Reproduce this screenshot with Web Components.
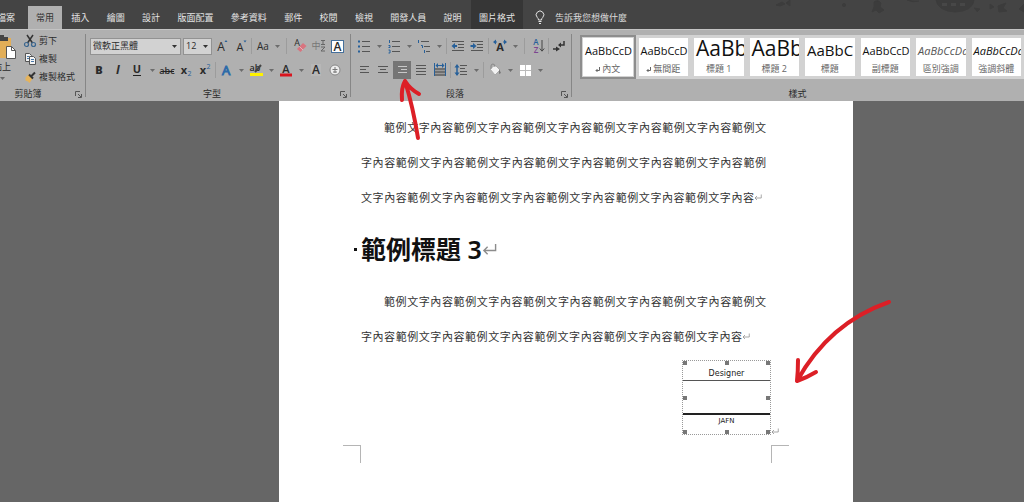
<!DOCTYPE html>
<html lang="zh-Hant">
<head>
<meta charset="utf-8">
<title>Word</title>
<style>
html, body { margin: 0; min-height: 100%; background: #666; }
body { font: 9px/14px "Open Sans", "Noto Sans CJK TC", sans-serif; color: #222; overflow-x: hidden; }
</style>
</head>
<body>
<word-app></word-app>
<script>
const BASE = `<style>*{box-sizing:border-box}button,input,select{font:inherit;color:inherit;border:0;margin:0;padding:0;background:none;border-radius:0}svg{display:block;overflow:visible}</style>`;
function define(name, html, setup) {
  customElements.define(name, class extends HTMLElement {
    constructor() {
      super();
      this.attachShadow({ mode: "open" });
    }
    connectedCallback() {
      this.shadowRoot.innerHTML = BASE + (typeof html === "function" ? html(this) : html);
      if (setup) setup(this);
    }
  });
}

const lines = (rows, color = "#555") => rows.map(([x, y, w]) => `<path d="M${x} ${y}h${w}" stroke="${color}"/>`).join("");
const T = (x, y, size, text, extra = "") => `<text x="${x}" y="${y}" font-size="${size}" ${extra}>${text}</text>`;
const MID = 'text-anchor="middle"';
const ICONS = {
  cut: `<path d="M6 3l5.500 8M12 3L6.500 11" stroke="#333" stroke-width="1.500" fill="none"/><circle cx="5.500" cy="12.500" r="2" fill="none" stroke="#3a668f" stroke-width="1.200"/><circle cx="12.500" cy="12.500" r="2" fill="none" stroke="#3a668f" stroke-width="1.200"/>`,
  copy: `<path d="M4.500 3.500h4l2 2v6h-6z" fill="#f4f4f4" stroke="#555"/><path d="M8.500 6.500h4l2 2v6h-6z" fill="#f4f4f4" stroke="#555"/><path d="M6 6.500h2M6 8.500h2M10 9.500h3M10 11.500h3" stroke="#4a78a8"/>`,
  brush: `<path d="M4.500 9.500l3-3 4 4-3 4.500q-1-2-4-2.500z" fill="#e5b35c"/><path d="M8 6.500l4 4M10 8.500l4-4" stroke="#333" stroke-width="2"/>`,
  grow: T(8, 14, 12, "A", MID) + `<path d="M11.500 5l1.500-2 1.500 2z" fill="#27609a"/>`,
  shrink: T(8, 14, 11, "A", MID) + `<path d="M11.500 3.500l1.500 2 1.500-2z" fill="#27609a"/>`,
  aa: T(10, 13, 10, "Aa", MID),
  erase: T(6, 9, 9, "A", MID) + `<path d="M6 12l6-6 3.500 3-6 6z" fill="#d8747f"/><path d="M8.500 9.500l3.500 3.500" stroke="#eab3b8"/>`,
  phonetic: T(6, 12, 9, "中", MID + ' fill="#777"') + `<path d="M11 3.500h4M13 3v4M11 7.500h4M11 10h4l-4 4h4" stroke="#666" fill="none"/>`,
  boxed: `<rect x="2.500" y="3.500" width="12" height="12" fill="#fff" stroke="#46709b"/>` + T(8.5, 14, 12, "A", MID + ' font-weight="600"'),
  bold: T(9, 13, 11, "B", MID + ' font-weight="800"'),
  italic: T(9, 13, 12, "I", MID + ' font-weight="bold" font-style="italic" font-family="Liberation Serif, serif"'),
  under: T(9, 12, 11, "U", MID + ' font-weight="700"') + `<path d="M5 14.500h8" stroke="#222"/>`,
  strike: T(9, 13, 9, "abc", MID + ' font-weight="600"') + `<path d="M3 10.500h13" stroke="#222"/>`,
  sub: T(7, 13, 11, "x", MID + ' font-weight="700"') + T(12.5, 15, 7, "2", MID + ' fill="#27609a"'),
  sup: T(7, 13, 11, "x", MID + ' font-weight="700"') + T(12.5, 8, 7, "2", MID + ' fill="#27609a"'),
  effect: T(9, 14, 13, "A", MID + ' fill="#a9c3df" stroke="#2f6ba8" stroke-width="1"'),
  mark: T(8, 10, 9, "ab", MID + ' font-weight="600"') + `<path d="M8 11l6-7" stroke="#444" stroke-width="2"/><path d="M3 13.500h13" stroke="#fff200" stroke-width="3"/>`,
  color: T(9, 12, 11, "A", MID + ' font-weight="600"') + `<path d="M3 14h12" stroke="#d9141e" stroke-width="3"/>`,
  shade: `<rect x="4" y="3" width="10" height="12" fill="#b7b7b7"/>` + T(9, 13, 12, "A", MID + ' font-weight="600"'),
  circled: `<circle cx="9" cy="9" r="5" fill="#eee" stroke="#888"/><path d="M6.500 8.500h5M9 6v6M7 11h4" stroke="#777"/>`,
  bullets: lines([[7, 4.5, 8], [7, 9.5, 8], [7, 14.5, 8]]) + `<path d="M3 4.500h2M3 9.500h2M3 14.500h2" stroke="#27609a" stroke-width="2"/>`,
  numbers: lines([[7, 4.5, 8], [7, 9.5, 8], [7, 14.5, 8]]) + `<path d="M4.500 3v3M3.500 8.500h1.500v2H3.500M3.500 13h1.500v3H3.500" stroke="#27609a" fill="none"/>`,
  levels: lines([[6, 4.5, 8], [9, 9.5, 6], [11, 14.5, 4]]) + `<path d="M3.500 3v3M6 8.500h1.500v2.500M9.500 13v3" stroke="#27609a" fill="none"/>`,
  outdent: lines([[3, 4.5, 12], [9, 7.5, 6], [9, 10.5, 6], [3, 13.5, 12]]) + `<path d="M8 9H5" stroke="#27609a" stroke-width="2"/><path d="M6 6v6L2.500 9z" fill="#27609a"/>`,
  indent: lines([[3, 4.5, 12], [9, 7.5, 6], [9, 10.5, 6], [3, 13.5, 12]]) + `<path d="M2.500 9h3" stroke="#27609a" stroke-width="2"/><path d="M5 6v6l3.500-3z" fill="#27609a"/>`,
  scale: T(9, 14, 11, "A", MID + ' font-weight="700"') + `<path d="M3 5h3M12 5h3" stroke="#27609a"/><path d="M5 2.500v5L2 5zM13 2.500v5L16 5z" fill="#27609a"/>`,
  sort: T(7, 8, 8, "A", MID + ' fill="#27609a" font-weight="600"') + T(7, 16, 8, "Z", MID + ' fill="#7c4591" font-weight="600"') + `<path d="M13 3v11M10.800 11.500l2.200 2.700 2.200-2.700" stroke="#444" fill="none"/>`,
  marks: `<path d="M14 4v4h-4M3 12h5" stroke="#333" stroke-width="1.500" fill="none"/><path d="M11 5.500v5L8 8zM6 9.500v5L10 12z" fill="#333"/>`,
  left: lines([[5, 5.5, 9], [5, 8.5, 6], [5, 11.5, 9]]),
  center: lines([[4, 5.5, 10], [6, 8.5, 6], [4, 11.5, 10]]),
  right: lines([[5, 5.5, 9], [8, 8.5, 6], [5, 11.5, 9]], "#c8c8c8"),
  justify: lines([[4, 4.5, 10], [4, 7.5, 10], [4, 10.5, 10], [4, 13.5, 10]]),
  spread: `<path d="M4 7h10v8H4z" fill="#6f6f6f"/><path d="M4 9.500h10M4 12.500h10" stroke="#999"/><path d="M3.500 2v13M14.500 2v13" stroke="#27609a"/><path d="M5 4.500h8" stroke="#27609a"/><path d="M7 2v5L4.500 4.500zM11 2v5l2.500-2.500z" fill="#27609a"/>`,
  spacing: lines([[8, 4.5, 7], [8, 7.5, 5], [8, 10.5, 7], [8, 13.5, 7]]) + `<path d="M5 5v9" stroke="#27609a" stroke-width="1.500"/><path d="M2.500 6.500h5L5 3zM2.500 11.500h5L5 15z" fill="#27609a"/>`,
  bucket: `<path d="M4 8l5-4 5 5-5 5z" fill="#f2f2f2" stroke="#aaa"/><path d="M5 8V5q0-2 2-2t2 3" stroke="#888" fill="none"/><path d="M13 8l2 4-2 1z" fill="#777"/>`,
  borders: `<rect x="4" y="4" width="11" height="11" fill="#fff"/><path d="M9.500 4v11M4 9.500h11" stroke="#bbb"/>`,
};

/* One ribbon command; "arrow" icons are the narrow drop-down halves. */
define("rb-tool", el => `<style>
  :host{display:block;flex:none;width:18px;height:18px}
  :host([icon=arrow]){width:10px}
  button{display:grid;place-items:center;width:100%;height:100%}
  button[aria-pressed=true]{background:#757575}
  svg text{font-family:"Open Sans","Noto Sans CJK TC",sans-serif}
  </style><button type="button" aria-label="${el.getAttribute("label")}" ${el.hasAttribute("pressed") ? 'aria-pressed="true"' : ""}>${
  el.getAttribute("icon") === "arrow"
    ? `<svg width="5" height="3"><path d="M0 0h5L2.500 3z" fill="#6c6c6c"/></svg>`
    : `<svg width="18" height="18" fill="#2b2b2b">${ICONS[el.getAttribute("icon")]}</svg>`}</button>`);

define("rb-sep", `<style>:host{display:block;flex:none;width:1px;height:16px;background:#9c9c9c}:host([wide]){margin:0 3px}:host([mid]){margin:0 1px}</style>`);

define("rb-select", el => `<style>
  :host{display:flex;align-items:center;position:relative;flex:none;width:29px;height:17px;background:#d2d2d2;border:1px solid #929292}
  :host([wide]){width:91px;margin-right:1px}
  select{appearance:none;width:100%;height:100%;padding:0 2px;outline:0;font-size:9px;line-height:14px}
  svg{position:absolute;right:3px;top:6px;pointer-events:none}
  </style><select aria-label="${el.getAttribute("label")}"><option>${el.getAttribute("value")}</option></select>
  <svg width="5" height="3"><path d="M0 0h5L2.500 3z" fill="#333"/></svg>`);

define("rb-group", el => `<style>
  :host{display:flex;flex-direction:column;flex:none}
  :host([grow]){flex:1;min-width:0}
  .body{height:55px}
  footer{display:flex;align-items:center;height:14px;padding:0 1px 0 0}
  footer span{flex:1;text-align:center}
  button{width:11px;height:11px;display:grid;place-items:center}
  </style><div class="body"><slot></slot></div><footer><span>${el.getAttribute("label")}</span>${
  el.hasAttribute("plain") ? "" : `<button type="button" aria-label="${el.getAttribute("label")}設定"><svg width="7" height="7"><path d="M.5 5V.5H5M3 3l3 3M6.500 3v3.500H3" stroke="#555" fill="none"/></svg></button>`}</footer>`);

define("rb-divider", `<style>:host{display:block;flex:none;width:1px;margin:2px 0 4px;background:#868686}</style>`);

define("rb-clipboard", `<style>
  :host{display:flex;height:54px;width:102px}
  .paste{width:38px;display:flex;flex-direction:column;align-items:center;padding-top:3px;line-height:12px;flex:none}
  .paste svg:last-child{margin-top:4px}
  ul{list-style:none;margin:0;padding:0}
  li button{display:flex;align-items:center;height:18px;white-space:nowrap}
  </style>
  <button class="paste" type="button"><svg width="30" height="26"><rect x="4" y="3" width="20" height="20" fill="#e2ae58"/><path d="M8 6V2h4V0h5v2h4v4z" fill="#444"/><path d="M19.500 11.500h5l4 4v8h-9z" fill="#fff" stroke="#555"/><path d="M24.500 11.500v4h4" fill="none" stroke="#555"/></svg>貼上<svg width="5" height="3"><path d="M0 0h5L2.500 3z" fill="#666"/></svg></button>
  <ul>
    <li><button type="button"><svg width="18" height="18">${ICONS.cut}</svg>剪下</button></li>
    <li><button type="button"><svg width="18" height="18">${ICONS.copy}</svg>複製</button></li>
    <li><button type="button"><svg width="18" height="18">${ICONS.brush}</svg>複製格式</button></li>
  </ul>`);

const ROWS = `<style>:host{display:block;padding:2px 3px 0 4px}.row{display:flex;align-items:center;gap:1px;height:24px}.anchor{position:relative}</style>`;
const arrow = label => `<rb-tool icon="arrow" label="${label}選項"></rb-tool>`;
const tool = (icon, label) => `<rb-tool icon="${icon}" label="${label}"></rb-tool>`;

define("rb-font", ROWS + `
  <div class="row"><rb-select wide label="字型" value="微軟正黑體"></rb-select><rb-select label="字型大小" value="12"></rb-select>
  ${tool("grow", "放大字型")}${tool("shrink", "縮小字型")}<rb-sep></rb-sep>${tool("aa", "大小寫轉換")}${arrow("大小寫")}<rb-sep wide></rb-sep>${tool("erase", "清除格式")}${tool("phonetic", "注音標示")}${tool("boxed", "字元框線")}</div>
  <div class="row">${tool("bold", "粗體")}${tool("italic", "斜體")}${tool("under", "底線")}${arrow("底線")}${tool("strike", "刪除線")}${tool("sub", "下標")}${tool("sup", "上標")}<rb-sep></rb-sep>${tool("effect", "文字效果")}${arrow("文字效果")}${tool("mark", "醒目提示")}${arrow("醒目提示")}${tool("color", "字型色彩")}${arrow("色彩")}${tool("shade", "字元網底")}${tool("circled", "圍繞字元")}</div>`);

define("rb-paragraph", ROWS + `<style>red-arrow{position:absolute;left:0;top:15px;pointer-events:none}</style>
  <div class="row">${tool("bullets", "項目符號")}${arrow("項目符號")}${tool("numbers", "編號")}${arrow("編號")}${tool("levels", "多層次清單")}${arrow("清單")}<rb-sep mid></rb-sep>${tool("outdent", "減少縮排")}${tool("indent", "增加縮排")}<rb-sep mid></rb-sep>${tool("scale", "亞洲方式配置")}${arrow("配置")}<rb-sep wide></rb-sep>${tool("sort", "排序")}<rb-sep></rb-sep>${tool("marks", "顯示編輯標記")}</div>
  <div class="row">${tool("left", "靠左對齊")}${tool("center", "置中")}<div class="anchor"><rb-tool pressed icon="right" label="靠右對齊"></rb-tool><red-arrow kind="up"></red-arrow></div>${tool("justify", "左右對齊")}${tool("spread", "分散對齊")}<rb-sep></rb-sep>${tool("spacing", "行距")}${arrow("行距")}<rb-sep mid></rb-sep>${tool("bucket", "網底")}${arrow("網底")}${tool("borders", "框線")}${arrow("框線")}</div>`);

define("style-tile", el => `<style>
  :host{display:block;min-width:0;padding:3px}
  :host([selected]){padding:1px;border:2px solid #8d8d8d;background:#d2d2d2}
  button{display:flex;flex-direction:column;width:100%;height:38px;background:#fff;overflow:hidden}
  .sample{height:25px;width:100%;line-height:25px;padding-left:2px;text-align:left;white-space:nowrap;overflow:hidden;color:#111}
  .s11{font-size:11px}.s15{font-size:15px}.s21{font-size:21px;line-height:20px}
  .italic{font-style:italic}.soft{color:#555}
  .name{display:flex;gap:2px;align-items:center;justify-content:center;width:100%;line-height:12px;color:#666}
  </style><button type="button"><span class="sample ${el.getAttribute("look")}">${el.getAttribute("sample") || "AaBbCcD"}</span><span class="name">${
  el.hasAttribute("mark") ? `<svg width="5" height="5"><path d="M4.500 0v3.500H1M2.500 2L1 3.500 2.500 5" stroke="#666" fill="none"/></svg>` : ""}<span>${el.getAttribute("name")}</span></span></button>`);

define("style-gallery", `<style>
  :host{display:block;padding:3px 0 0 8px}
  div{display:grid;grid-template-columns:repeat(8,minmax(55px,1fr));height:44px;background:#d2d2d2}
  </style><div>
  <style-tile selected mark name="內文" look="s11"></style-tile>
  <style-tile mark name="無間距" look="s11"></style-tile>
  <style-tile name="標題 1" look="s21" sample="AaBb"></style-tile>
  <style-tile name="標題 2" look="s21" sample="AaBb"></style-tile>
  <style-tile name="標題" look="s15" sample="AaBbC"></style-tile>
  <style-tile name="副標題" look="s11"></style-tile>
  <style-tile name="區別強調" look="s11 italic soft" sample="AaBbCcDd"></style-tile>
  <style-tile name="強調斜體" look="s11 italic" sample="AaBbCcDd"></style-tile></div>`);

define("ribbon-bar", `<style>
  :host{display:flex;position:relative;z-index:2;background:#b0b0b0;border-top:1px solid #c4c4c4;padding:2px 0 0;color:#2b2b2b}
  .clip{margin-left:-17px}
  </style>
  <rb-group class="clip" label="剪貼簿"><rb-clipboard></rb-clipboard></rb-group><rb-divider></rb-divider>
  <rb-group label="字型"><rb-font></rb-font></rb-group><rb-divider></rb-divider>
  <rb-group label="段落"><rb-paragraph></rb-paragraph></rb-group><rb-divider></rb-divider>
  <rb-group grow plain label="樣式"><style-gallery></style-gallery></rb-group>`);

define("title-bar", `<style>
  :host{display:flex;align-items:flex-end;position:relative;height:29px;background:#444;color:#e4e4e4;overflow:hidden}
  nav{display:flex;align-items:flex-end;justify-content:space-between;flex:0 0 495px;margin-left:4px}
  nav button,.file{height:23px;padding:0 8px;white-space:nowrap;flex:none}
  .file{margin-left:-12px;width:36px}
  nav .on{background:#b0b0b0;color:#333}
  nav .tool{background:#363636;height:29px;padding-top:6px}
  label{display:flex;align-items:center;gap:10px;height:23px;margin-left:12px}
  input{width:90px;height:14px;outline:0}
  input::placeholder{color:#dcdcdc;opacity:1}
  .art{position:absolute;right:0;top:0}
  </style>
  <button class="file" type="button">檔案</button>
  <nav>${["常用", "插入", "繪圖", "設計", "版面配置", "參考資料", "郵件", "校閱", "檢視", "開發人員", "說明", "圖片格式"]
    .map((t, i) => `<button type="button" class="${i === 0 ? "on" : i === 11 ? "tool" : ""}">${t}</button>`).join("")}</nav>
  <label><svg width="10" height="13" fill="none" stroke="#e4e4e4"><path d="M3.500 9Q3.500 7.500 2.300 6.500A3.800 3.800 0 1 1 7.700 6.500Q6.500 7.500 6.500 9zM3.500 10.500h3M4 12.500h2"/></svg><input aria-label="搜尋" placeholder="告訴我您想做什麼"></label>
  <svg class="art" width="260" height="16" fill="#3c3c3c" stroke="#3c3c3c"><path d="M12 5l6-3 3 2-5 2zM22 3l4-3v6z"/><circle cx="80" cy="5" r="1.500"/><path d="M110 2q4-3 7 1l-1 4 4 3-5 3-3-3-4 2 2-5z"/><path d="M143 0q6 3 12 1"/><path d="M172 0h38q-1 11-19 12-17-1-19-12z"/><path d="M178 3h5v3h-5zM187 3h5v3h-5zM196 3h5v3h-5z" fill="#474747" stroke="none"/><path d="M210 8l6 1-3 3M226 4l4 3-4 2zM234 6l8-3-3 5 4 3-8 1zM255 9l5-5v8z"/></svg>`);

/* Hand-drawn pointers laid over the document. */
define("red-arrow", el => `<style>:host{display:block}</style>` + (el.getAttribute("kind") === "up"
  ? `<svg width="28" height="66" fill="none" stroke="#dc1f26" stroke-width="4" stroke-linecap="round" stroke-linejoin="round"><path d="M25 62Q20 31 12 5M9 24Q8 12 12 5Q17 13 26 18"/></svg>`
  : `<svg width="100" height="88" fill="none" stroke="#dc1f26" stroke-width="4" stroke-linecap="round" stroke-linejoin="round"><path d="M95 5Q35 26 3 84M4 63Q4 75 3 84Q12 81 22 75"/></svg>`));

define("return-mark", `<style>:host{display:block;flex:none;width:8px}:host([large]){width:15px}svg{width:100%;height:auto}</style>
  <svg viewBox="0 0 16 14" fill="none" stroke="#8c8c8c" stroke-width="1.500"><path d="M14.500 1v7H2M6 4L2 8l4 4"/></svg>`);

define("doc-line", el => `<style>
  :host{display:flex;align-items:center;height:35px;font-size:11px;line-height:35px;color:#333}
  span{flex:1;text-align:justify;text-align-last:justify;white-space:nowrap}
  :host([first]){padding-left:23px}
  :host([end]){padding-right:4px}
  :host([short]){padding-right:16px}
  </style><span><slot></slot></span>${el.hasAttribute("end") || el.hasAttribute("short") ? "<return-mark></return-mark>" : ""}`);

define("doc-heading", `<style>
  h1{display:flex;align-items:center;height:69px;margin:0 0 0 -7px;font:600 25px/69px "Noto Sans","Noto Sans CJK TC",sans-serif;color:#111;white-space:nowrap}
  i{width:3px;height:3px;margin-right:4px;background:#111}
  </style><h1><i></i><slot></slot><return-mark large></return-mark></h1>`);

define("signature-picture", `<style>
  :host{display:block;position:relative;width:89px;height:75px;border:1px dotted #999;font:8px/10px "DejaVu Sans",sans-serif;color:#222;text-align:center}
  .top{padding-top:8px;height:20px;border-bottom:1px solid #555}
  .bottom{margin-top:32px;border-top:2px solid #222;padding-top:1px;font-size:7px}
  i{position:absolute;width:4px;height:4px;background:#777}
  .l{left:0}.c{left:42px}.r{right:0}.t{top:0}.m{top:35px}.b{bottom:0}
  return-mark{position:absolute;left:88px;bottom:-1px}
  red-arrow{position:absolute;left:111px;top:-64px}
  </style><div class="top">Designer</div><div class="bottom">JAFN</div>
  <i class="l t"></i><i class="c t"></i><i class="r t"></i><i class="l m"></i><i class="r m"></i><i class="l b"></i><i class="c b"></i><i class="r b"></i>
  <return-mark></return-mark><red-arrow kind="left"></red-arrow>`);

define("doc-page", `<style>
  :host{display:block;background:#fff;padding:9px 64px 40px}
  .text{padding:0 23px 0 18px}
  signature-picture{margin:6px 18px 0 auto}
  .corners{display:flex;justify-content:space-between;margin-top:10px}
  .corners i{width:18px;height:18px;border-top:1px solid #b5b5b5}
  .corners i:first-child{border-right:1px solid #b5b5b5}
  .corners i:last-child{border-left:1px solid #b5b5b5}
  </style>
  <div class="text"><slot></slot></div>
  <signature-picture></signature-picture>
  <div class="corners"><i></i><i></i></div>`);

define("word-app", `<style>
  main{display:grid;grid-template-columns:31fr 574px 19fr;background:#666}
  doc-page{grid-column:2}
  </style>
  <title-bar></title-bar><ribbon-bar></ribbon-bar>
  <main><doc-page>
    <doc-line first>範例文字內容範例文字內容範例文字內容範例文字內容範例文字內容範例文</doc-line>
    <doc-line>字內容範例文字內容範例文字內容範例文字內容範例文字內容範例文字內容範例</doc-line>
    <doc-line end>文字內容範例文字內容範例文字內容範例文字內容範例文字內容範例文字內容</doc-line>
    <doc-heading>範例標題 3</doc-heading>
    <doc-line first>範例文字內容範例文字內容範例文字內容範例文字內容範例文字內容範例文</doc-line>
    <doc-line short>字內容範例文字內容範例文字內容範例文字內容範例文字內容範例文字內容</doc-line>
  </doc-page></main>`);
</script>
</body>
</html>
